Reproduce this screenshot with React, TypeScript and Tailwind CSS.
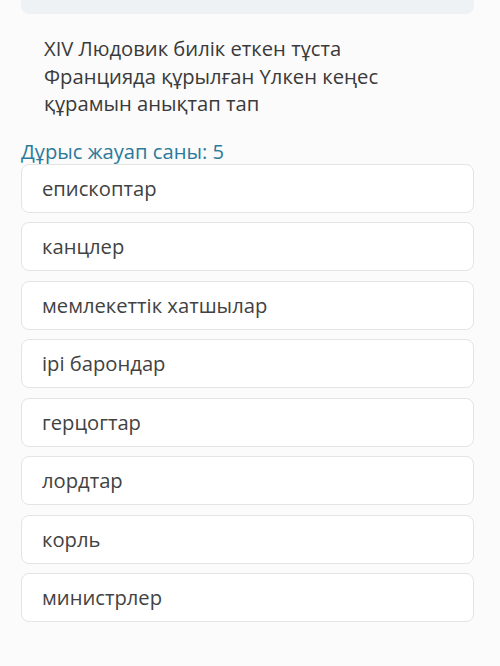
const options = [
  "епископтар",
  "канцлер",
  "мемлекеттік хатшылар",
  "ірі барондар",
  "герцогтар",
  "лордтар",
  "корль",
  "министрлер",
];

export default function App() {
  return (
    <div className="w-[500px] h-[666px] bg-[#fbfbfb] font-['Open_Sans',sans-serif] overflow-hidden">
      <div className="ml-[21px] w-[453px] h-[14px] bg-[#eef2f4] rounded-b-lg" />

      <p className="mt-[21px] ml-[44px] pr-6 text-[20.2px] leading-[27.5px] text-[#3a3a3a]">
        XIV Людовик билік еткен тұста
        <br />
        Францияда құрылған Үлкен кеңес
        <br />
        құрамын анықтап тап
      </p>

      <div className="mt-[21px] ml-[21px] text-[20.2px] leading-[24px] text-[#2b7a99]">
        Дұрыс жауап саны: 5
      </div>

      <div className="mt-[1px] ml-[21px] w-[453px] flex flex-col gap-[9.5px]">
        {options.map((o) => (
          <div
            key={o}
            className="h-[49px] flex items-center pl-[20px] border border-[#e4e4e4] rounded-lg bg-white text-[20.2px] text-[#424242]"
          >
            {o}
          </div>
        ))}
      </div>
    </div>
  );
}
